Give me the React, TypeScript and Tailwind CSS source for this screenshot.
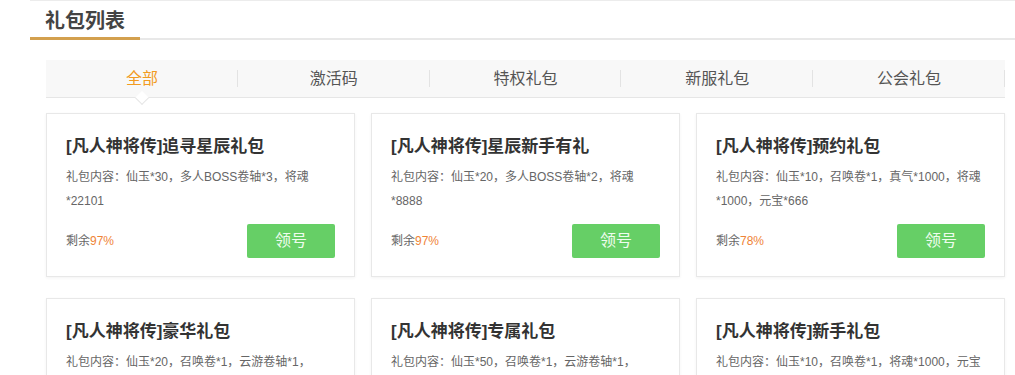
import React from 'react';

const tabs = ['全部', '激活码', '特权礼包', '新服礼包', '公会礼包'];

const gifts = [
  { title: '[凡人神将传]追寻星辰礼包', lines: ['礼包内容：仙玉*30，多人BOSS卷轴*3，将魂', '*22101'], left: '97%' },
  { title: '[凡人神将传]星辰新手有礼', lines: ['礼包内容：仙玉*20，多人BOSS卷轴*2，将魂', '*8888'], left: '97%' },
  { title: '[凡人神将传]预约礼包', lines: ['礼包内容：仙玉*10，召唤卷*1，真气*1000，将魂', '*1000，元宝*666'], left: '78%' },
  { title: '[凡人神将传]豪华礼包', lines: ['礼包内容：仙玉*20，召唤卷*1，云游卷轴*1，', '将魂*1000，元宝*888'], left: '95%' },
  { title: '[凡人神将传]专属礼包', lines: ['礼包内容：仙玉*50，召唤卷*1，云游卷轴*1，', '将魂*2000，元宝*888'], left: '96%' },
  { title: '[凡人神将传]新手礼包', lines: ['礼包内容：仙玉*10，召唤卷*1，将魂*1000，元宝', '*500'], left: '98%' },
];

const App = () => {
  return (
    <div
      className="w-[1015px] min-h-[375px] bg-white pl-[30px]"
      style={{ fontFamily: '"Liberation Sans", "Noto Sans CJK SC", sans-serif' }}
    >
      {/* Header */}
      <div className="relative h-[40px] border-t border-[#ececec] border-b-2 border-b-[#e8e8e8]">
        <h2 className="pl-[15px] pt-[7px] text-[20px] leading-[26px] font-bold text-[#444]">礼包列表</h2>
        <div className="absolute left-0 bottom-[-2px] w-[110px] h-[3px] bg-[#d3a04e]" />
      </div>

      <div className="ml-[16px] w-[959px]">
        {/* Tabs */}
        <div className="mt-[20px] flex h-[38px] bg-[#f8f8f8] border-b border-[#e6e6e6]">
          {tabs.map((t, i) => (
            <div key={t} className="relative flex-1 flex items-center justify-center">
              <span className={`text-[16px] ${i === 0 ? 'text-[#f29b21]' : 'text-[#555]'}`}>{t}</span>
              <span className="absolute right-0 top-[10px] h-[17px] w-px bg-[#e3e3e3]" />
              {i === 0 && (
                <span className="absolute left-1/2 bottom-[-6px] -ml-[5px] w-[10px] h-[10px] rotate-45 bg-white border-r border-b border-[#e6e6e6]" />
              )}
            </div>
          ))}
        </div>

        {/* Cards */}
        <div className="mt-[15px] grid grid-cols-3 gap-x-[16px] gap-y-[21px]">
          {gifts.map((g) => (
            <div
              key={g.title}
              className="h-[164px] border border-[#e8e8e8] shadow-[0_1px_3px_rgba(0,0,0,0.05)] px-[19px] pt-[20px] flex flex-col"
            >
              <div className="text-[17px] leading-[26px] font-bold text-[#333]">{g.title}</div>
              <p className="mt-[5px] h-[48px] text-[12px] leading-[24px] text-[#666] overflow-hidden whitespace-nowrap">
                {g.lines[0]}
                <br />
                {g.lines[1]}
              </p>
              <div className="mt-[11px] flex items-center justify-between">
                <span className="text-[12px] text-[#666]">
                  剩余<span className="text-[#ef8437]">{g.left}</span>
                </span>
                <button className="w-[88px] h-[34px] rounded-[2px] bg-[#66cf66] text-[16px] text-[#eefcee]">领号</button>
              </div>
            </div>
          ))}
        </div>
      </div>
    </div>
  );
};

export default App;
